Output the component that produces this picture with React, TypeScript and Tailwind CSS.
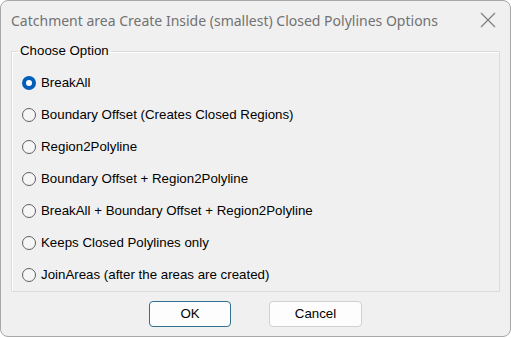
import { useState } from "react";

const options = [
  "BreakAll",
  "Boundary Offset (Creates Closed Regions)",
  "Region2Polyline",
  "Boundary Offset + Region2Polyline",
  "BreakAll + Boundary Offset + Region2Polyline",
  "Keeps Closed Polylines only",
  "JoinAreas (after the areas are created)",
];

function Radio({ checked }: { checked: boolean }) {
  if (checked) {
    return (
      <span className="flex h-[14px] w-[14px] flex-shrink-0 items-center justify-center rounded-full bg-[#005fb8]">
        <span className="h-[6px] w-[6px] rounded-full bg-white" />
      </span>
    );
  }
  return <span className="h-[14px] w-[14px] flex-shrink-0 rounded-full border border-[#5f5f5f] bg-[#f6f6f6]" />;
}

export default function App() {
  const [selected, setSelected] = useState(0);

  return (
    <div className="h-[338px] w-[511px] bg-white font-['Liberation_Sans',Arial,sans-serif]">
      <div className="flex h-[337px] flex-col rounded-[8px] border border-[#a8a8a8] bg-[#f0f0f0]">
        {/* Title bar */}
        <div className="flex h-[38px] items-center justify-between pl-[10px] pr-[14px]">
          <span className="font-['Noto_Sans',sans-serif] text-[14px] text-[#727272]">
            Catchment area Create Inside (smallest) Closed Polylines Options
          </span>
          <svg className="h-[16px] w-[16px]" viewBox="0 0 16 16" fill="none" stroke="#7a7a7a" strokeWidth={1.1}>
            <path d="M1 1L15 15M15 1L1 15" />
          </svg>
        </div>

        {/* Group box */}
        <fieldset className="mx-[10px] mt-[4px] border border-[#dcdcdc] shadow-[inset_1px_1px_0_#fff]">
          <legend className="ml-[6px] px-[2px] text-[13.3px] leading-[16px] text-black">Choose Option</legend>
          <div className="flex flex-col pt-[8px]">
            {options.map((o, i) => (
              <label
                key={o}
                onClick={() => setSelected(i)}
                className="flex h-[32px] cursor-default items-center gap-[5px] pl-[10px] text-[13.3px] text-black"
              >
                <Radio checked={selected === i} />
                <span>{o}</span>
              </label>
            ))}
          </div>
        </fieldset>

        {/* Buttons */}
        <div className="mt-[9px] flex justify-center gap-[38px] text-[13.3px] text-black">
          <button className="h-[26px] w-[82px] rounded-[4px] border border-[#31708f] bg-[#fdfdfd]">OK</button>
          <button className="h-[26px] w-[93px] rounded-[4px] border border-[#d0d0d0] bg-[#fdfdfd]">Cancel</button>
        </div>
      </div>
    </div>
  );
}
